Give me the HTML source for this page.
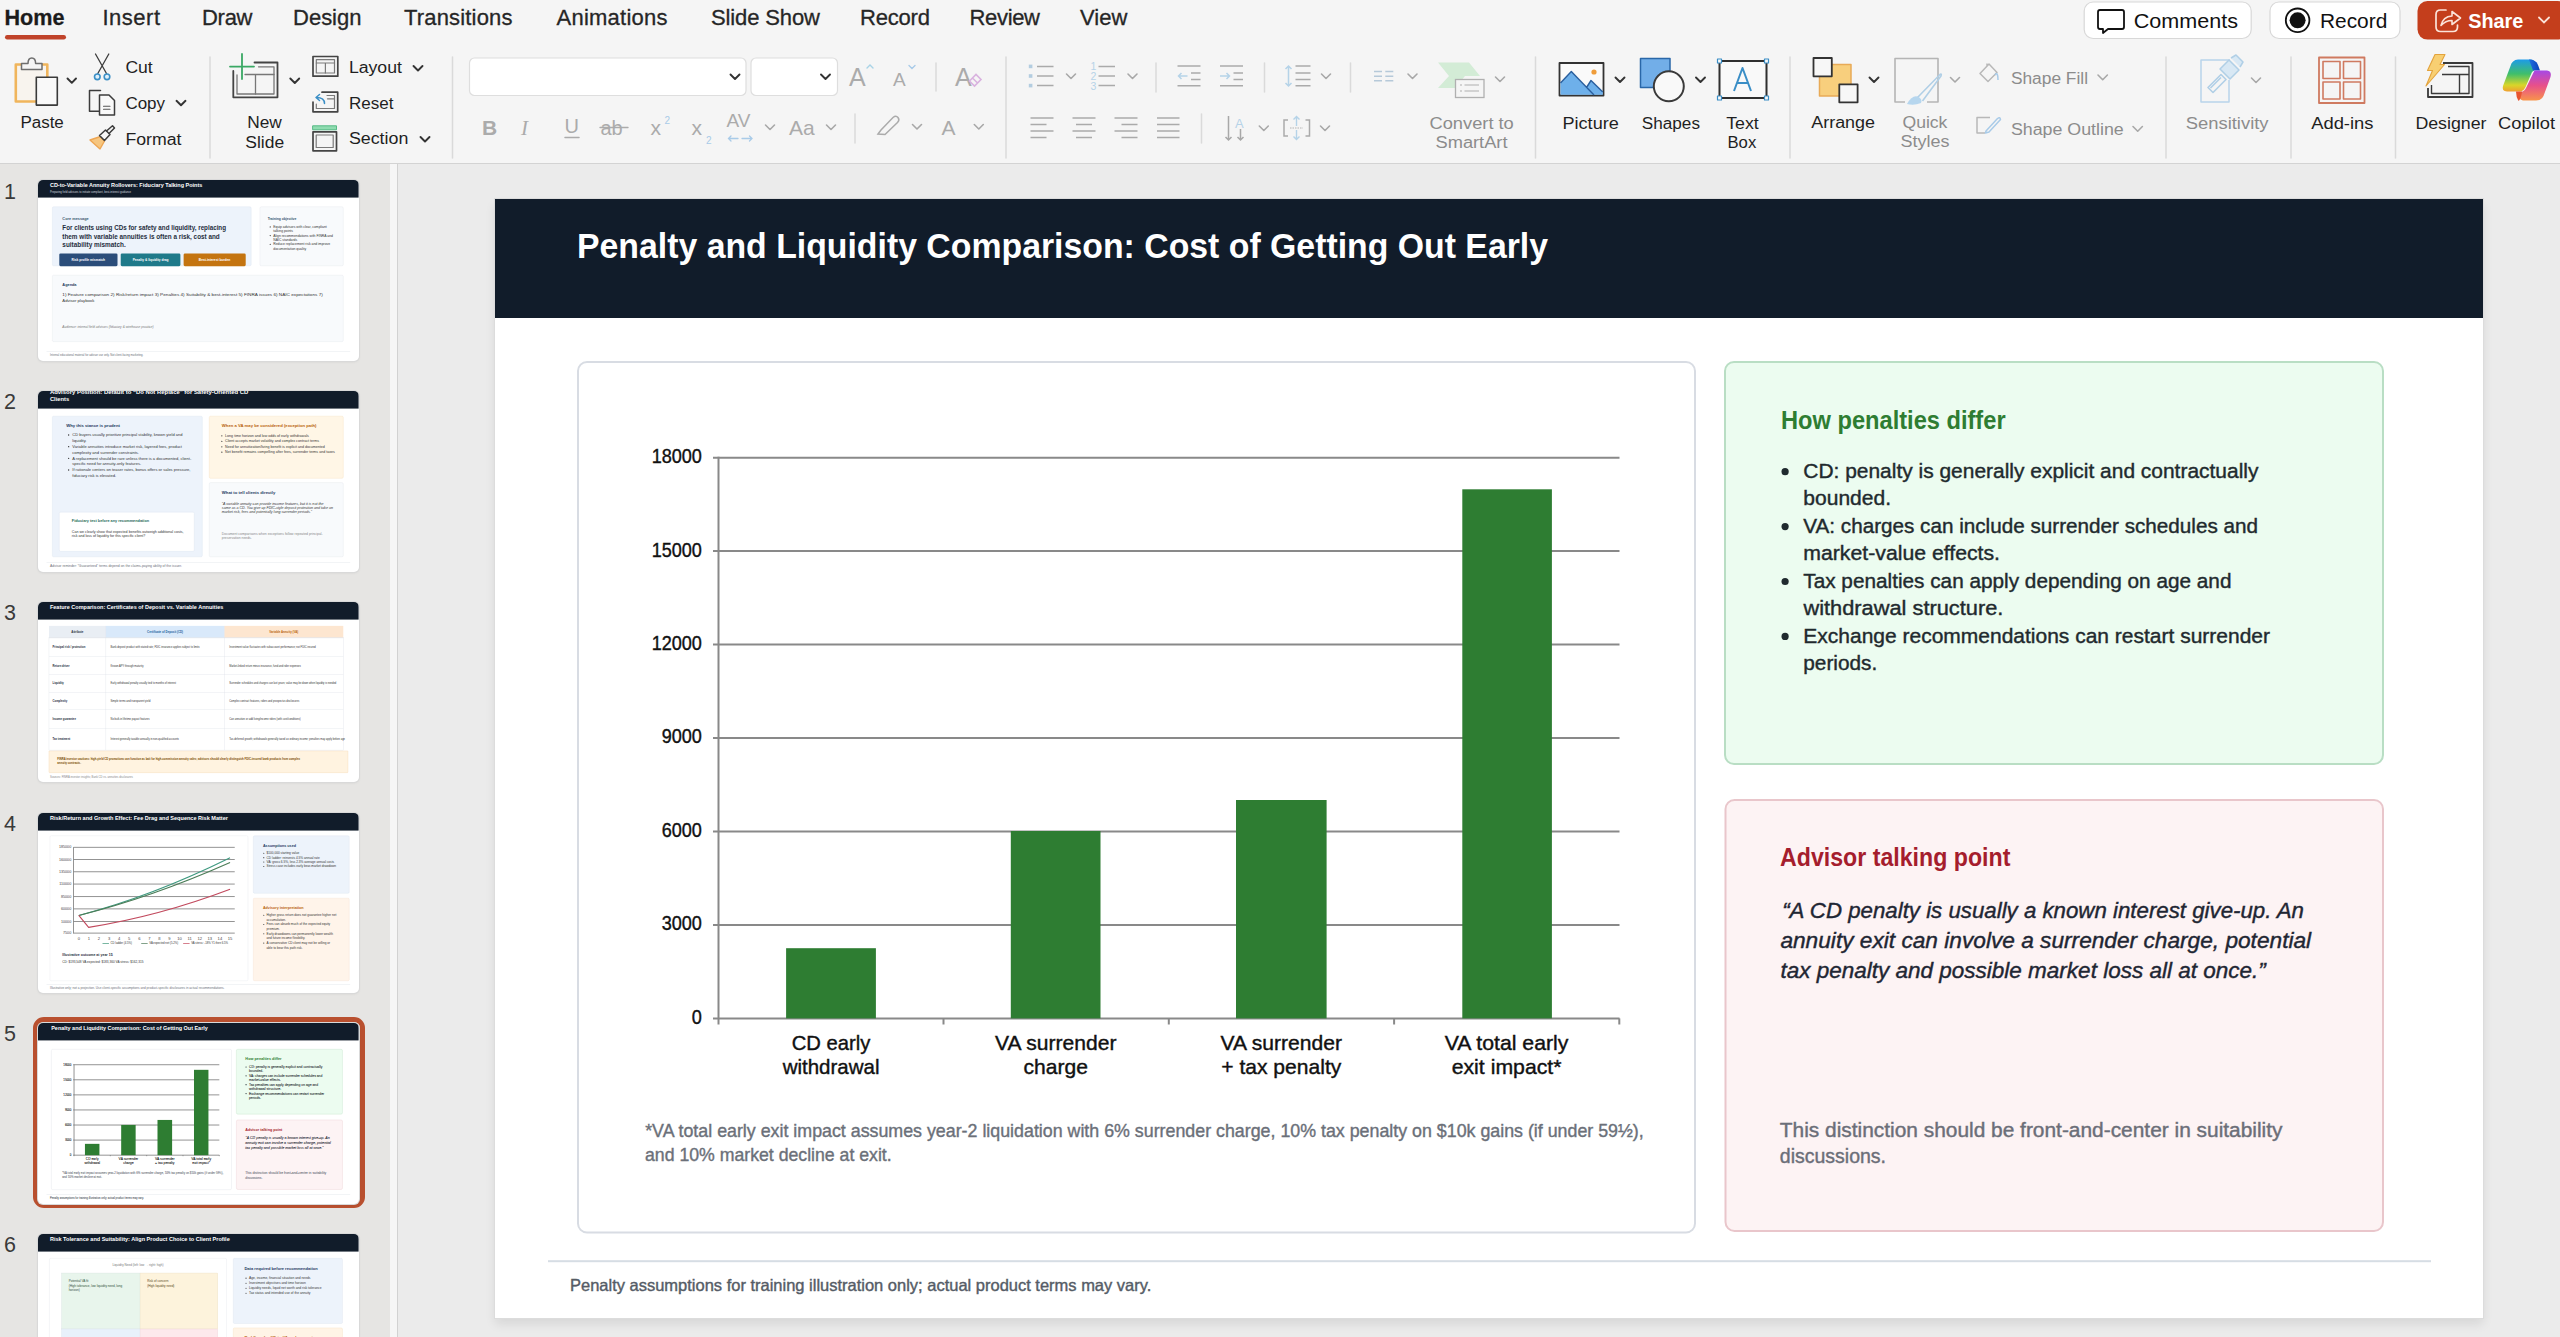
<!DOCTYPE html>
<html><head><meta charset="utf-8">
<style>
*{box-sizing:border-box}
html,body{margin:0;padding:0}
body{width:2560px;height:1337px;overflow:hidden;position:relative;background:#ebebeb;font-family:"Liberation Sans",sans-serif;color:#1a1a1a}
#top{position:absolute;left:0;top:0;width:2560px;height:164px;background:#f5f5f5;border-bottom:1px solid #d3d3d3}
#panel{position:absolute;left:0;top:164px;width:390px;height:1173px;background:#e6e5e3;overflow:hidden}
#pstrip{position:absolute;left:390px;top:164px;width:8px;height:1173px;background:#f6f6f6;border-right:1px solid #d2d2d2}
</style></head>
<body>
<div id="top">
<svg width="2560" height="45" viewBox="0 0 2560 45" style="position:absolute;left:0;top:0" font-family="Liberation Sans, sans-serif">
<g font-size="22" fill="#262626" stroke="#262626" stroke-width="0.3">
<text x="4.5" y="25" font-weight="bold" fill="#1b1b1b" textLength="60" lengthAdjust="spacingAndGlyphs">Home</text>
<text x="102.5" y="25" textLength="57.5" lengthAdjust="spacing">Insert</text>
<text x="202" y="25" textLength="50.5" lengthAdjust="spacing">Draw</text>
<text x="293" y="25" textLength="68.5" lengthAdjust="spacing">Design</text>
<text x="404" y="25" textLength="108.5" lengthAdjust="spacing">Transitions</text>
<text x="556.5" y="25" textLength="111" lengthAdjust="spacing">Animations</text>
<text x="711" y="25" textLength="109" lengthAdjust="spacing">Slide Show</text>
<text x="860" y="25" textLength="70" lengthAdjust="spacing">Record</text>
<text x="969.5" y="25" textLength="70.5" lengthAdjust="spacing">Review</text>
<text x="1080" y="25" textLength="47.5" lengthAdjust="spacing">View</text>
</g>
<rect x="5" y="35" width="61" height="4.5" rx="2.2" fill="#c0432a"/>
</svg>

<svg id="rib" width="2560" height="163" viewBox="0 0 2560 163" style="position:absolute;left:0;top:0" font-family="Liberation Sans, sans-serif">
<g fill="none" stroke-linecap="round" stroke-linejoin="round">
<!-- separators -->
<g stroke="#dadada" stroke-width="1.5">
<line x1="210" y1="57" x2="210" y2="158"/><line x1="452.5" y1="57" x2="452.5" y2="158"/>
<line x1="1006" y1="57" x2="1006" y2="158"/><line x1="1535.5" y1="57" x2="1535.5" y2="158"/>
<line x1="1790" y1="57" x2="1790" y2="158"/><line x1="2166" y1="57" x2="2166" y2="158"/>
<line x1="2291" y1="57" x2="2291" y2="158"/><line x1="2395.5" y1="57" x2="2395.5" y2="158"/>
<line x1="936" y1="63" x2="936" y2="91"/><line x1="855" y1="114" x2="855" y2="143"/>
<line x1="1156" y1="63" x2="1156" y2="92"/><line x1="1264.5" y1="63" x2="1264.5" y2="92"/>
<line x1="1350.5" y1="63" x2="1350.5" y2="92"/><line x1="1201.5" y1="114" x2="1201.5" y2="143"/>
</g>
<!-- Paste -->
<rect x="15.8" y="64.5" width="31.5" height="37" fill="#f8f4ee" stroke="#f0b55c" stroke-width="2.6"/>
<path d="M21.5 69.5 V63.5 H28 Q28 58 31.8 58 Q35.6 58 35.6 63.5 H42 V69.5 Z" fill="#f5f5f5" stroke="#6e6e6e" stroke-width="1.5"/>
<rect x="36.3" y="77.3" width="21" height="27.8" fill="#f9f9f9" stroke="#3a3a3a" stroke-width="1.6"/>
<!-- Cut -->
<path d="M95.5 54 L106.5 73.5 M108.8 54 L97.8 73.5" stroke="#3c3c3c" stroke-width="1.3"/>
<circle cx="97.3" cy="76.8" r="2.8" stroke="#3b8fc6" stroke-width="1.6" fill="#dff0fb"/>
<circle cx="107" cy="76.8" r="2.8" stroke="#3b8fc6" stroke-width="1.6" fill="#dff0fb"/>
<!-- Copy -->
<path d="M100.5 90.5 H89.5 V111.3 H98.8" stroke="#3c3c3c" stroke-width="1.5"/>
<path d="M99.5 95 H109 L114.5 100.5 V115 H99.5 Z" fill="#f9f9f9" stroke="#3c3c3c" stroke-width="1.5"/>
<path d="M103.5 106.2 H110 M103.5 109.3 H110" stroke="#555" stroke-width="1.1"/>
<!-- Format painter -->
<path d="M90 140 L100.5 136.5 L104.5 141 L100 149 Z" fill="#f6c680" stroke="#eea653" stroke-width="1.4"/>
<path d="M99.5 135.5 L105.5 130 L110 134.5 L104.5 140.5 Z" fill="#f7f7f7" stroke="#3c3c3c" stroke-width="1.5"/>
<path d="M106.5 131 L112.5 125.8 L114.5 128 L109 133.5" stroke="#3c3c3c" stroke-width="1.5"/>
<!-- New slide -->
<path d="M254.5 62.5 H277.5 V97.3 H233.3 V71" stroke="#444" stroke-width="1.8"/>
<path d="M258.5 66.8 H274 V94 H237 V75" stroke="#777" stroke-width="1.3"/>
<path d="M245 74.5 H274 M255.5 74.5 V94" stroke="#777" stroke-width="1.3"/>
<path d="M230 66.6 H254 M242 54 V79" stroke="#3aa864" stroke-width="1.8"/>
<!-- Layout -->
<rect x="313" y="56.5" width="24.8" height="19.7" stroke="#444" stroke-width="1.7"/>
<rect x="316.3" y="59.7" width="18.2" height="13.3" stroke="#7a7a7a" stroke-width="1.2"/>
<path d="M316.3 63 H334.5 M325.4 63 V73" stroke="#7a7a7a" stroke-width="1.2"/>
<!-- Reset -->
<path d="M322 92.2 H337.7 V111.8 H313 V102" stroke="#444" stroke-width="1.7"/>
<path d="M327 95.5 H334.5 V108.5 H316.3 V104" stroke="#7a7a7a" stroke-width="1.2"/>
<path d="M327.5 98.8 H334.5" stroke="#7a7a7a" stroke-width="1.2"/>
<path d="M324.5 103.5 Q324.5 97.5 316.5 97.5 M319.5 94.5 L316 97.5 L319.5 100.5" stroke="#3b8fc6" stroke-width="1.5"/>
<!-- Section -->
<rect x="313" y="125.8" width="23.5" height="4" fill="#8fdcb0" stroke="#55b985" stroke-width="1"/>
<rect x="313" y="131.8" width="23.5" height="19" stroke="#444" stroke-width="1.7"/>
<rect x="316.2" y="135" width="17" height="12.5" stroke="#7a7a7a" stroke-width="1.2"/>
<!-- chevrons dark -->
<g stroke="#333" stroke-width="1.9">
<path d="M67.5 78.5 L71.8 82.8 L76 78.5"/><path d="M176.5 100.8 L181 105.2 L185.5 100.8"/>
<path d="M290.3 78.5 L294.8 83 L299.2 78.5"/><path d="M413.5 66 L418 70.5 L422.5 66"/>
<path d="M420.5 137 L425 141.5 L429.5 137"/><path d="M730.5 74.5 L735 79 L739.5 74.5"/>
<path d="M821 74.5 L825.5 79 L830 74.5"/>
<path d="M1615.5 77.5 L1620 82 L1624.5 77.5"/><path d="M1696 77.5 L1700.5 82 L1705 77.5"/>
<path d="M1869.5 77.5 L1874 82 L1878.5 77.5"/>
</g>
<!-- chevrons gray -->
<g stroke="#a8a8a8" stroke-width="1.6">
<path d="M765.5 125 L770 129.5 L774.5 125"/><path d="M826.5 125 L831 129.5 L835.5 125"/>
<path d="M912.5 124.5 L917 129 L921.5 124.5"/><path d="M974.3 124.5 L978.8 129 L983.3 124.5"/>
<path d="M1066.5 74 L1071 78.5 L1075.5 74"/><path d="M1128 74 L1132.5 78.5 L1137 74"/>
<path d="M1321.5 74 L1326 78.5 L1330.5 74"/><path d="M1408 74 L1412.5 78.5 L1417 74"/>
<path d="M1495.5 77 L1500 81.5 L1504.5 77"/>
<path d="M1259.3 126 L1263.8 130.5 L1268.3 126"/><path d="M1320.5 126 L1325 130.5 L1329.5 126"/>
<path d="M1950.5 77.5 L1955 82 L1959.5 77.5"/><path d="M2098 75 L2102.7 79.7 L2107.4 75"/>
<path d="M2133 126.5 L2137.7 131.2 L2142.4 126.5"/><path d="M2251.5 78 L2256 82.5 L2260.5 78"/>
</g>
<!-- font boxes -->
<rect x="469.5" y="58" width="276.5" height="37.5" rx="5" fill="#fff" stroke="#dedede" stroke-width="1.2"/>
<rect x="751" y="58" width="86.5" height="37.5" rx="5" fill="#fff" stroke="#dedede" stroke-width="1.2"/>
<g stroke="#333" stroke-width="1.9"><path d="M730.5 74.5 L735 79 L739.5 74.5"/><path d="M821 74.5 L825.5 79 L830 74.5"/></g>
</g>
<!-- font group glyphs -->
<g fill="#ababab">
<text x="849" y="86" font-size="25" style="font-weight:300">A</text>
<text x="893" y="86" font-size="19">A</text>
<text x="955" y="86" font-size="25">A</text>
<text x="482" y="135" font-size="21" font-weight="bold">B</text>
<text x="521" y="135" font-size="21" font-style="italic" font-family="Liberation Serif">I</text>
<text x="564.5" y="133" font-size="20">U</text>
<text x="600.5" y="135" font-size="20">ab</text>
<text x="650.5" y="135" font-size="21">x</text>
<text x="691.5" y="135" font-size="21">x</text>
<text x="726.5" y="127" font-size="19">AV</text>
<text x="789" y="135" font-size="21">Aa</text>
<text x="941.5" y="135" font-size="21">A</text>
</g>
<g fill="none" stroke-linecap="round">
<path d="M565 137.5 H579" stroke="#ababab" stroke-width="1.5"/>
<path d="M600 127.5 H628" stroke="#ababab" stroke-width="1.4"/>
<path d="M867 68 L870 65 L873 68" stroke="#a9d3e6" stroke-width="1.4"/>
<path d="M909 65.5 L912 68.5 L915 65.5" stroke="#a9cbe8" stroke-width="1.4"/>
<path d="M969.5 81 L976 74.5 L981 79.5 L974.5 86 Z M972.5 78 L977.5 83" stroke="#d9b2df" stroke-width="1.6"/>
<path d="M728.5 138.5 H738 M731 136 L728.5 138.5 L731 141 M742 138.5 H752 M749.5 136 L752 138.5 L749.5 141" stroke="#a9cbe8" stroke-width="1.3"/>
<path d="M878 134 L881 130 L893 117.5 Q896 115 898 117.5 Q900 120 897.5 122.5 L885 134.5 Z" stroke="#ababab" stroke-width="1.5"/>
</g>
<g fill="#a9cbe8"><text x="664.5" y="124" font-size="10">2</text><text x="706" y="144" font-size="10">2</text></g>
<!-- paragraph group -->
<g fill="none" stroke-width="1.5" stroke-linecap="butt">
<g fill="#b3cde0"><rect x="1028.8" y="64.6" width="3.6" height="3.6"/><rect x="1028.8" y="74.2" width="3.6" height="3.6"/><rect x="1028.8" y="83.8" width="3.6" height="3.6"/></g>
<path d="M1037 66.4 H1053.5 M1037 76 H1053.5 M1037 85.6 H1053.5" stroke="#aaaaaa"/>
<path d="M1098.5 66.4 H1115 M1098.5 76 H1115 M1098.5 85.6 H1115" stroke="#aaaaaa"/>
<path d="M1177.5 66.1 H1200.5 M1191 72.9 H1200.5 M1191 79.4 H1200.5 M1177.5 85.8 H1200.5" stroke="#aaaaaa"/>
<path d="M1187.5 76 H1178.5 M1181.5 73 L1178.5 76 L1181.5 79" stroke="#b5d3e8"/>
<path d="M1220 66.1 H1243 M1233.5 72.9 H1243 M1233.5 79.4 H1243 M1220 85.8 H1243" stroke="#aaaaaa"/>
<path d="M1220 76 H1229.5 M1226.5 73 L1229.5 76 L1226.5 79" stroke="#b5d3e8"/>
<path d="M1288.5 66 V86 M1285.5 69 L1288.5 66 L1291.5 69 M1285.5 83 L1288.5 86 L1291.5 83" stroke="#b5d3e8"/>
<path d="M1295.5 66.1 H1310.5 M1295.5 72.9 H1310.5 M1295.5 79.4 H1310.5 M1295.5 85.8 H1310.5" stroke="#aaaaaa"/>
<path d="M1374 71.4 H1382 M1374 76.2 H1382 M1374 80.8 H1382 M1385.3 71.4 H1393.3 M1385.3 76.2 H1393.3 M1385.3 80.8 H1393.3" stroke="#b6c9d9"/>
<path d="M1030.5 117.9 H1053.5 M1030.5 124.5 H1046.5 M1030.5 130.9 H1053.5 M1030.5 137.4 H1046.5" stroke="#aaaaaa"/>
<path d="M1072.5 117.9 H1095.5 M1076 124.5 H1092 M1072.5 130.9 H1095.5 M1076 137.4 H1092" stroke="#aaaaaa"/>
<path d="M1114.5 117.9 H1137.5 M1121.5 124.5 H1137.5 M1114.5 130.9 H1137.5 M1121.5 137.4 H1137.5" stroke="#aaaaaa"/>
<path d="M1157 117.9 H1179.5 M1157 124.5 H1179.5 M1157 130.9 H1179.5 M1157 137.4 H1179.5" stroke="#aaaaaa"/>
<path d="M1228.5 116 V140 M1225.5 137 L1228.5 140 L1231.5 137 M1240.5 129 V140 M1237.5 137 L1240.5 140 L1243.5 137" stroke="#a8a8a8" stroke-width="1.5"/>
<path d="M1288 120 H1284 V136 H1288 M1305.5 120 H1309.5 V136 H1305.5" stroke="#aaaaaa" stroke-width="1.5"/>
<path d="M1296.5 116.5 V126 M1293.5 119.5 L1296.5 116.5 L1299.5 119.5 M1296.5 130 V139.5 M1293.5 136.5 L1296.5 139.5 L1299.5 136.5" stroke="#b5d3e8" stroke-width="1.4"/>
<path d="M1290 128 H1303" stroke="#b5b5b5" stroke-width="1.2" stroke-dasharray="1.5 1"/>
<!-- smartart -->
<path d="M1438 62.5 H1469 L1480 76 H1465 L1455 88 H1438 L1449 76 Z" fill="#d3ecd6" stroke="none"/>
<rect x="1455.5" y="79.5" width="28.5" height="18" fill="#f5f5f5" stroke="#b0b0b0" stroke-width="1.3"/>
<path d="M1460 85 H1462 M1464.5 85 H1479 M1460 91 H1462 M1464.5 91 H1479" stroke="#b0b0b0" stroke-width="1.2"/>
</g>
<g fill="#b5d3e8" font-size="10.5"><text x="1090.5" y="70">1</text><text x="1090.5" y="80">2</text><text x="1090.5" y="90">3</text></g>
<text x="1235" y="127.5" font-size="13" fill="#b5d3e8">A</text>
<!-- Picture -->
<g stroke-linejoin="round">
<rect x="1559.5" y="63" width="44" height="32.5" fill="#fafafa" stroke="#333" stroke-width="1.8"/>
<path d="M1560.5 94.8 V83 L1571.3 71.6 L1586.5 87.5 L1591 80.5 L1602.8 92 V94.8 Z" fill="#6eb0ea"/><path d="M1560.5 83 L1571.3 71.6 L1594 95 M1586.5 87.5 L1591 80.5 L1602.8 92" fill="none" stroke="#2a5f9e" stroke-width="1.4"/>
<circle cx="1594" cy="72" r="2.6" fill="#ef9d3a"/>
<!-- Shapes -->
<rect x="1640.5" y="58.5" width="29.5" height="29" fill="#72aee8" stroke="#2a67a8" stroke-width="1.5"/>
<circle cx="1668.8" cy="86.3" r="15" fill="#f9f9f9" stroke="#3a3a3a" stroke-width="2"/>
<!-- Text box -->
<rect x="1719.5" y="61" width="47" height="37" fill="#f9f9f9" stroke="#2f2f2f" stroke-width="2"/>
<g fill="#f9f9f9" stroke="#3a8ec6" stroke-width="1.2"><rect x="1717.5" y="59" width="4" height="4"/><rect x="1764.5" y="59" width="4" height="4"/><rect x="1717.5" y="96" width="4" height="4"/><rect x="1764.5" y="96" width="4" height="4"/></g>
<path d="M1734 91 L1742.5 68 L1751 91 M1737 83 H1748" fill="none" stroke="#3a8ec6" stroke-width="2"/>
<!-- Arrange -->
<rect x="1819.5" y="64.5" width="31.5" height="31.5" fill="#f8cf7d" stroke="#e8aa57" stroke-width="1.5"/>
<rect x="1813.5" y="58" width="18.3" height="18.3" fill="#f7f7f7" stroke="#333" stroke-width="1.8"/>
<rect x="1839.3" y="84.3" width="18.3" height="18" fill="#f7f7f7" stroke="#333" stroke-width="1.8"/>
<!-- Quick styles -->
<path d="M1905 102 H1895 V58.5 H1938 V102 H1927" fill="none" stroke="#b5b5b5" stroke-width="1.6"/>
<path d="M1917 98 L1940 74.5 Q1942 73 1941 76 L1922.5 101" fill="none" stroke="#b0cfe6" stroke-width="1.6"/>
<path d="M1907 104 Q1912 95 1917.5 96.5 Q1923 99 1921 103 Q1914 106 1907 104 Z" fill="#b6d6ee" stroke="none"/>
<!-- Shape fill / outline -->
<path d="M1980 73.5 L1989 64 L1997 72.5 L1988 81.5 Z M1987 66 V63.5" fill="none" stroke="#b8b8b8" stroke-width="1.5"/>
<path d="M1995 75 Q1998 71 1998 80" fill="none" stroke="#a9cbe8" stroke-width="1.5"/>
<path d="M1990 117.5 H1977 V133 H1985" fill="none" stroke="#b8b8b8" stroke-width="1.5"/>
<path d="M1986 131 L1997.5 118.5 Q2000 116.5 2000.5 119.5 L1989 132 L1985.5 133 Z" fill="none" stroke="#a9cbe8" stroke-width="1.5"/>
<!-- Sensitivity -->
<path d="M2230 60 H2201 V102 H2229 V80" fill="none" stroke="#b8d4ea" stroke-width="1.5"/>
<path d="M2208 87.5 L2221 74.5 L2226 79.5 L2213 92.5 Z M2210.5 88 L2221 77.5" fill="none" stroke="#b0cfe6" stroke-width="1.6"/>
<path d="M2220 69 L2229 60 L2239 70 L2230 79 Z M2231 58 L2236 55 L2243 62 L2240 67" fill="#d8e8f4" stroke="#b0cfe6" stroke-width="1.5"/>
<!-- Add-ins -->
<rect x="2319" y="57.5" width="45.5" height="45.5" fill="none" stroke="#cf7a60" stroke-width="1.8"/>
<g fill="none" stroke="#cf7a60" stroke-width="1.6"><rect x="2323" y="61.5" width="17" height="17"/><rect x="2343.5" y="61.5" width="17" height="17"/><rect x="2323" y="82" width="17" height="17"/><rect x="2343.5" y="82" width="17" height="17"/></g>
<!-- Designer -->
<path d="M2443 63 H2472.5 V97 H2428 V88" fill="none" stroke="#3a3a3a" stroke-width="1.8"/>
<path d="M2448 66.5 H2469 V93.5 H2431.5 V85 M2442 74.5 H2469 M2459.5 74.5 V93.5" fill="none" stroke="#3a3a3a" stroke-width="1.4"/>
<path d="M2435 54.5 L2445 54.5 L2440 64.5 L2444.5 64.5 L2426 86 L2432.5 70.5 L2427.5 70.5 Z" fill="#f8cf72" stroke="#e3a33c" stroke-width="1.1" stroke-linejoin="round"/>
</g>
<!-- Copilot -->
<defs>
<linearGradient id="cpl" x1="0" y1="0" x2="0" y2="1"><stop offset="0" stop-color="#1c9be8"/><stop offset="0.45" stop-color="#3fbf6a"/><stop offset="0.8" stop-color="#d8d62a"/><stop offset="1" stop-color="#f0a030"/></linearGradient>
<linearGradient id="cpr" x1="0" y1="0" x2="0" y2="1"><stop offset="0" stop-color="#a648e6"/><stop offset="0.5" stop-color="#e8508a"/><stop offset="1" stop-color="#f8944a"/></linearGradient>
<linearGradient id="cpt" x1="0" y1="0" x2="1" y2="0"><stop offset="0" stop-color="#1f6fe0"/><stop offset="1" stop-color="#0b3fb8"/></linearGradient>
</defs>
<path d="M2536 69 Q2537 60 2531 59.5 L2518 59.5 Q2512 60 2510.5 66 L2503 86 Q2501.5 91 2507 91.5 L2520 91.5 Q2524 91 2526 86 L2532 72 Z" fill="url(#cpl)"/>
<path d="M2529 59.5 Q2536 59.5 2538 65 L2540 70.5 L2533 70.5 Z" fill="url(#cpt)"/>
<path d="M2535 70.5 L2547 70.5 Q2552 71 2550.5 77 L2543.5 96 Q2541.5 100.5 2536 100.5 L2523 100.5 Q2519 100 2516.5 92 L2521 92 Q2524.5 91.5 2526.5 87 L2533.5 72.5 Q2534 70.8 2535 70.5 Z" fill="url(#cpr)"/>
<path d="M2516 91.5 L2522 91.5 Q2521 99 2518.5 101 Q2516 97 2516 91.5 Z" fill="#e85530"/>
<!-- top buttons -->
<rect x="2084.2" y="2" width="167" height="36.5" rx="9" fill="#fff" stroke="#d8d8d8" stroke-width="1.2"/>
<path d="M2100 10 H2122 Q2124 10 2124 12 V27 Q2124 29 2122 29 H2108 L2103 33 V29 H2100 Q2098 29 2098 27 V12 Q2098 10 2100 10 Z" fill="none" stroke="#111" stroke-width="1.8" stroke-linejoin="round"/>
<rect x="2270" y="2" width="130" height="36.5" rx="9" fill="#fff" stroke="#d8d8d8" stroke-width="1.2"/>
<circle cx="2297.6" cy="20.3" r="11.8" fill="none" stroke="#111" stroke-width="1.8"/>
<circle cx="2297.6" cy="20.3" r="8" fill="#111"/>
<rect x="2417.5" y="1" width="150" height="38.6" rx="10" fill="#c43e1c"/>
<path d="M2446 10 H2440.5 Q2436 10 2436 14.5 V27 Q2436 31.5 2440.5 31.5 H2453 Q2457.5 31.5 2457.5 27 V25" fill="none" stroke="#fbe3d9" stroke-width="1.7" stroke-linecap="round"/>
<path d="M2441 25.5 Q2443 16.5 2452 16 V11.5 L2460.5 18 L2452 24.5 V20.5 Q2445.5 20.5 2441 25.5 Z" fill="none" stroke="#fbe3d9" stroke-width="1.6" stroke-linejoin="round"/>
<path d="M2539 17.5 L2544 22.5 L2549 17.5" fill="none" stroke="#fbe3d9" stroke-width="1.8" stroke-linecap="round"/>
<!-- labels -->
<text x="20.40" y="128.4" font-size="16" font-weight="normal" fill="#1f1f1f" textLength="43.41" lengthAdjust="spacingAndGlyphs">Paste</text>
<text x="125.40" y="73.4" font-size="16" font-weight="normal" fill="#1f1f1f" textLength="27.30" lengthAdjust="spacingAndGlyphs">Cut</text>
<text x="125.40" y="108.5" font-size="16" font-weight="normal" fill="#1f1f1f" textLength="39.65" lengthAdjust="spacingAndGlyphs">Copy</text>
<text x="125.40" y="144.8" font-size="16" font-weight="normal" fill="#1f1f1f" textLength="56.07" lengthAdjust="spacingAndGlyphs">Format</text>
<text x="247.20" y="128.4" font-size="16" font-weight="normal" fill="#1f1f1f" textLength="34.60" lengthAdjust="spacingAndGlyphs">New</text>
<text x="245.30" y="147.7" font-size="16" font-weight="normal" fill="#1f1f1f" textLength="38.88" lengthAdjust="spacingAndGlyphs">Slide</text>
<text x="348.90" y="73.1" font-size="16" font-weight="normal" fill="#1f1f1f" textLength="53.04" lengthAdjust="spacingAndGlyphs">Layout</text>
<text x="348.90" y="109.2" font-size="16" font-weight="normal" fill="#1f1f1f" textLength="44.50" lengthAdjust="spacingAndGlyphs">Reset</text>
<text x="348.90" y="144.4" font-size="16" font-weight="normal" fill="#1f1f1f" textLength="59.46" lengthAdjust="spacingAndGlyphs">Section</text>
<text x="1429.50" y="128.75" font-size="16" font-weight="normal" fill="#8c8c8c" textLength="84.26" lengthAdjust="spacingAndGlyphs">Convert to</text>
<text x="1435.50" y="147.5" font-size="16" font-weight="normal" fill="#8c8c8c" textLength="72.02" lengthAdjust="spacingAndGlyphs">SmartArt</text>
<text x="1562.50" y="128.75" font-size="16" font-weight="normal" fill="#1f1f1f" textLength="56.25" lengthAdjust="spacingAndGlyphs">Picture</text>
<text x="1641.75" y="128.75" font-size="16" font-weight="normal" fill="#1f1f1f" textLength="58.21" lengthAdjust="spacingAndGlyphs">Shapes</text>
<text x="1726.25" y="128.75" font-size="16" font-weight="normal" fill="#1f1f1f" textLength="32.55" lengthAdjust="spacingAndGlyphs">Text</text>
<text x="1727.50" y="147.5" font-size="16" font-weight="normal" fill="#1f1f1f" textLength="28.72" lengthAdjust="spacingAndGlyphs">Box</text>
<text x="1811.25" y="128.1" font-size="16" font-weight="normal" fill="#1f1f1f" textLength="63.77" lengthAdjust="spacingAndGlyphs">Arrange</text>
<text x="1902.50" y="128" font-size="16" font-weight="normal" fill="#8c8c8c" textLength="44.89" lengthAdjust="spacingAndGlyphs">Quick</text>
<text x="1900.50" y="147.1" font-size="16" font-weight="normal" fill="#8c8c8c" textLength="48.97" lengthAdjust="spacingAndGlyphs">Styles</text>
<text x="2010.90" y="83.6" font-size="16" font-weight="normal" fill="#8c8c8c" textLength="77.15" lengthAdjust="spacingAndGlyphs">Shape Fill</text>
<text x="2010.90" y="134.8" font-size="16" font-weight="normal" fill="#8c8c8c" textLength="112.86" lengthAdjust="spacingAndGlyphs">Shape Outline</text>
<text x="2185.80" y="129" font-size="16" font-weight="normal" fill="#8c8c8c" textLength="82.73" lengthAdjust="spacingAndGlyphs">Sensitivity</text>
<text x="2311.20" y="129" font-size="16" font-weight="normal" fill="#1f1f1f" textLength="62.24" lengthAdjust="spacingAndGlyphs">Add-ins</text>
<text x="2415.40" y="129" font-size="16" font-weight="normal" fill="#1f1f1f" textLength="71.13" lengthAdjust="spacingAndGlyphs">Designer</text>
<text x="2498.00" y="129" font-size="16" font-weight="normal" fill="#1f1f1f" textLength="57.01" lengthAdjust="spacingAndGlyphs">Copilot</text>
<text x="2133.80" y="28.4" font-size="20.5" font-weight="normal" fill="#111" textLength="104.21" lengthAdjust="spacingAndGlyphs">Comments</text>
<text x="2320.00" y="28.4" font-size="20.5" font-weight="normal" fill="#111" textLength="67.29" lengthAdjust="spacingAndGlyphs">Record</text>
<text x="2468.20" y="28.4" font-size="20.5" font-weight="bold" fill="#fff" textLength="55.18" lengthAdjust="spacingAndGlyphs">Share</text>
</svg>

</div>
<div id="panel">
<div style="position:absolute;left:4px;top:17.6px;font-size:21.5px;line-height:1;color:#3a3a3a;font-family:'Liberation Sans',sans-serif">1</div>
<div style="position:absolute;left:38.4px;top:16.4px;width:320.6px;height:180.5px;background:#fff;border-radius:5px;overflow:hidden;box-shadow:0 0 0 1px #d9d9d9, 0 1px 3px rgba(0,0,0,0.08)">
<svg width="320.6" height="180.5" viewBox="0 0 1988 1119" preserveAspectRatio="none" font-family="Liberation Sans, sans-serif" style="position:absolute;left:0;top:0"><rect x="0" y="0" width="1988" height="109" rx="0" fill="#111c2a" stroke="none" stroke-width="2"/><text x="74" y="45" font-size="38" fill="#fff" font-weight="bold" textLength="945" lengthAdjust="spacingAndGlyphs">CD-to-Variable Annuity Rollovers: Fiduciary Talking Points</text><text x="74" y="78" font-size="17.0" fill="#cfd6df" font-weight="normal" font-style="normal" text-anchor="start">Preparing field advisors to initiate compliant, best-interest guidance</text><rect x="89" y="166" width="1233" height="366" rx="8" fill="#edf3fb" stroke="#d5dfeb" stroke-width="2"/><text x="151" y="248" font-size="24.0" fill="#3b5670" font-weight="bold" font-style="normal" text-anchor="start">Core message</text><text x="151" y="308" font-size="40" fill="#1f2d3d" font-weight="bold" textLength="1015" lengthAdjust="spacingAndGlyphs">For clients using CDs for safety and liquidity, replacing</text><text x="151" y="363" font-size="40" fill="#1f2d3d" font-weight="bold" textLength="976" lengthAdjust="spacingAndGlyphs">them with variable annuities is often a risk, cost and</text><text x="151" y="418" font-size="40" fill="#1f2d3d" font-weight="bold" textLength="393" lengthAdjust="spacingAndGlyphs">suitability mismatch.</text><rect x="132" y="456" width="361" height="78" rx="8" fill="#2b4d7a" stroke="none" stroke-width="2"/><rect x="513" y="456" width="370" height="78" rx="8" fill="#1f7a8a" stroke="none" stroke-width="2"/><rect x="903" y="456" width="385" height="78" rx="8" fill="#c47410" stroke="none" stroke-width="2"/><text x="312" y="503" font-size="20.0" fill="#fff" font-weight="bold" font-style="normal" text-anchor="middle">Risk profile mismatch</text><text x="698" y="503" font-size="20.0" fill="#fff" font-weight="bold" font-style="normal" text-anchor="middle">Penalty &amp; liquidity drag</text><text x="1095" y="503" font-size="20.0" fill="#fff" font-weight="bold" font-style="normal" text-anchor="middle">Best-interest burden</text><rect x="1376" y="166" width="517" height="366" rx="8" fill="#f8fafc" stroke="#dfe4ea" stroke-width="2"/><text x="1424" y="245" font-size="21.0" fill="#3b5670" font-weight="bold" font-style="normal" text-anchor="start">Training objective</text><circle cx="1440" cy="290.7" r="3.6" fill="#333"/><text x="1458.9" y="297.0" font-size="21.0" fill="#333" font-weight="normal" font-style="normal" text-anchor="start">Equip advisors with clear, compliant</text><text x="1458.9" y="324.0" font-size="21.0" fill="#333" font-weight="normal" font-style="normal" text-anchor="start">talking points</text><circle cx="1440" cy="344.7" r="3.6" fill="#333"/><text x="1458.9" y="351.0" font-size="21.0" fill="#333" font-weight="normal" font-style="normal" text-anchor="start">Align recommendations with FINRA and</text><text x="1458.9" y="378.0" font-size="21.0" fill="#333" font-weight="normal" font-style="normal" text-anchor="start">NAIC standards</text><circle cx="1440" cy="398.7" r="3.6" fill="#333"/><text x="1458.9" y="405.0" font-size="21.0" fill="#333" font-weight="normal" font-style="normal" text-anchor="start">Reduce replacement risk and improve</text><text x="1458.9" y="432.0" font-size="21.0" fill="#333" font-weight="normal" font-style="normal" text-anchor="start">documentation quality</text><rect x="89" y="590" width="1804" height="412" rx="8" fill="#f8fafc" stroke="#dfe4ea" stroke-width="2"/><text x="151" y="655" font-size="24.0" fill="#1f3a5f" font-weight="bold" font-style="normal" text-anchor="start">Agenda</text><text x="151" y="722" font-size="26" fill="#333" textLength="1615" lengthAdjust="spacingAndGlyphs">1) Feature comparison  2) Risk/return impact  3) Penalties  4) Suitability &amp; best-interest  5) FINRA issues  6) NAIC expectations  7)</text><text x="151" y="757" font-size="26.0" fill="#333" font-weight="normal" font-style="normal" text-anchor="start">Advisor playbook</text><text x="151" y="918" font-size="20.0" fill="#777" font-weight="normal" font-style="italic" text-anchor="start">Audience: internal field advisors (fiduciary &amp; wirehouse practice)</text><rect x="53" y="1061" width="1883" height="2" rx="0" fill="#d6dde4" stroke="none" stroke-width="2"/><text x="75" y="1092" font-size="17.0" fill="#6b7079" font-weight="normal" font-style="normal" text-anchor="start">Internal educational material for advisor use only. Not client-facing marketing.</text></svg>
</div>
<div style="position:absolute;left:4px;top:228.3px;font-size:21.5px;line-height:1;color:#3a3a3a;font-family:'Liberation Sans',sans-serif">2</div>
<div style="position:absolute;left:38.4px;top:227.1px;width:320.6px;height:180.5px;background:#fff;border-radius:5px;overflow:hidden;box-shadow:0 0 0 1px #d9d9d9, 0 1px 3px rgba(0,0,0,0.08)">
<svg width="320.6" height="180.5" viewBox="0 0 1988 1119" preserveAspectRatio="none" font-family="Liberation Sans, sans-serif" style="position:absolute;left:0;top:0"><rect x="0" y="0" width="1988" height="109" rx="0" fill="#111c2a" stroke="none" stroke-width="2"/><text x="74" y="16" font-size="38" fill="#fff" font-weight="bold" textLength="1230" lengthAdjust="spacingAndGlyphs">Advisory Position: Default to “Do Not Replace” for Safety-Oriented CD</text><text x="74" y="60" font-size="38" fill="#fff" font-weight="bold" textLength="120" lengthAdjust="spacingAndGlyphs">Clients</text><rect x="89" y="156" width="930" height="872" rx="8" fill="#edf3fb" stroke="#d5dfeb" stroke-width="2"/><text x="175" y="225" font-size="26.25" fill="#1f3a5f" font-weight="bold" font-style="normal" text-anchor="start">Why this stance is prudent</text><circle cx="190" cy="272.5" r="4.2" fill="#333"/><text x="212.5" y="280.0" font-size="25.0" fill="#333" font-weight="normal" font-style="normal" text-anchor="start">CD buyers usually prioritize principal stability, known yield and</text><text x="212.5" y="316.25" font-size="25.0" fill="#333" font-weight="normal" font-style="normal" text-anchor="start">liquidity.</text><circle cx="190" cy="345.0" r="4.2" fill="#333"/><text x="212.5" y="352.5" font-size="25.0" fill="#333" font-weight="normal" font-style="normal" text-anchor="start">Variable annuities introduce market risk, layered fees, product</text><text x="212.5" y="388.75" font-size="25.0" fill="#333" font-weight="normal" font-style="normal" text-anchor="start">complexity and surrender constraints.</text><circle cx="190" cy="417.5" r="4.2" fill="#333"/><text x="212.5" y="425.0" font-size="25.0" fill="#333" font-weight="normal" font-style="normal" text-anchor="start">A replacement should be rare unless there is a documented, client-</text><text x="212.5" y="461.25" font-size="25.0" fill="#333" font-weight="normal" font-style="normal" text-anchor="start">specific need for annuity-only features.</text><circle cx="190" cy="490.0" r="4.2" fill="#333"/><text x="212.5" y="497.5" font-size="25.0" fill="#333" font-weight="normal" font-style="normal" text-anchor="start">If rationale centers on teaser rates, bonus offers or sales pressure,</text><text x="212.5" y="533.75" font-size="25.0" fill="#333" font-weight="normal" font-style="normal" text-anchor="start">fiduciary risk is elevated.</text><rect x="132" y="751" width="837" height="243" rx="8" fill="#ffffff" stroke="#d5dfeb" stroke-width="2"/><text x="210" y="810" font-size="23.75" fill="#1f6b5a" font-weight="bold" font-style="normal" text-anchor="start">Fiduciary test before any recommendation</text><text x="210" y="880" font-size="22.5" fill="#333" font-weight="normal" font-style="normal" text-anchor="start">Can we clearly show that expected benefits outweigh additional costs,</text><text x="210" y="905" font-size="22.5" fill="#333" font-weight="normal" font-style="normal" text-anchor="start">risk and loss of liquidity for this specific client?</text><rect x="1062" y="156" width="831" height="385" rx="8" fill="#fff6e6" stroke="#f1dcb8" stroke-width="2"/><text x="1140" y="225" font-size="26.25" fill="#b8620a" font-weight="bold" font-style="normal" text-anchor="start">When a VA may be considered (exception path)</text><circle cx="1140" cy="278.2" r="3.8" fill="#333"/><text x="1160.25" y="285.0" font-size="22.5" fill="#333" font-weight="normal" font-style="normal" text-anchor="start">Long time horizon and low odds of early withdrawals</text><circle cx="1140" cy="312.0" r="3.8" fill="#333"/><text x="1160.25" y="318.75" font-size="22.5" fill="#333" font-weight="normal" font-style="normal" text-anchor="start">Client accepts market volatility and complex contract terms</text><circle cx="1140" cy="345.8" r="3.8" fill="#333"/><text x="1160.25" y="352.5" font-size="22.5" fill="#333" font-weight="normal" font-style="normal" text-anchor="start">Need for annuitization/living benefit is explicit and documented</text><circle cx="1140" cy="379.5" r="3.8" fill="#333"/><text x="1160.25" y="386.25" font-size="22.5" fill="#333" font-weight="normal" font-style="normal" text-anchor="start">Net benefit remains compelling after fees, surrender terms and taxes</text><rect x="1062" y="568" width="831" height="460" rx="8" fill="#f8fafc" stroke="#dfe4ea" stroke-width="2"/><text x="1140" y="640" font-size="26.25" fill="#1f3a5f" font-weight="bold" font-style="normal" text-anchor="start">What to tell clients directly</text><text x="1140" y="705" font-size="22.5" fill="#333" font-weight="normal" font-style="italic" text-anchor="start">“A variable annuity can provide income features, but it is not the</text><text x="1140" y="732" font-size="22.5" fill="#333" font-weight="normal" font-style="italic" text-anchor="start">same as a CD. You give up FDIC-style deposit protection and take on</text><text x="1140" y="759" font-size="22.5" fill="#333" font-weight="normal" font-style="italic" text-anchor="start">market risk, fees and potentially long surrender periods.”</text><text x="1140" y="895" font-size="21.25" fill="#888" font-weight="normal" font-style="normal" text-anchor="start">Document comparisons when exceptions follow repeated principal-</text><text x="1140" y="920" font-size="21.25" fill="#888" font-weight="normal" font-style="normal" text-anchor="start">preservation needs.</text><rect x="53" y="1061" width="1883" height="2" rx="0" fill="#d6dde4" stroke="none" stroke-width="2"/><text x="75" y="1092" font-size="21.25" fill="#6b7079" font-weight="normal" font-style="normal" text-anchor="start">Advisor reminder: “Guaranteed” terms depend on the claims-paying ability of the issuer.</text></svg>
</div>
<div style="position:absolute;left:4px;top:439.0px;font-size:21.5px;line-height:1;color:#3a3a3a;font-family:'Liberation Sans',sans-serif">3</div>
<div style="position:absolute;left:38.4px;top:437.8px;width:320.6px;height:180.5px;background:#fff;border-radius:5px;overflow:hidden;box-shadow:0 0 0 1px #d9d9d9, 0 1px 3px rgba(0,0,0,0.08)">
<svg width="320.6" height="180.5" viewBox="0 0 1988 1119" preserveAspectRatio="none" font-family="Liberation Sans, sans-serif" style="position:absolute;left:0;top:0"><rect x="0" y="0" width="1988" height="109" rx="0" fill="#111c2a" stroke="none" stroke-width="2"/><text x="74" y="45" font-size="38" fill="#fff" font-weight="bold" textLength="1075" lengthAdjust="spacingAndGlyphs">Feature Comparison: Certificates of Deposit vs. Variable Annuities</text><rect x="68" y="148" width="352" height="74" rx="0" fill="#e9eef4" stroke="none" stroke-width="2"/><rect x="420" y="148" width="736" height="74" rx="0" fill="#d9e9fa" stroke="none" stroke-width="2"/><rect x="1156" y="148" width="737" height="74" rx="0" fill="#fde6d0" stroke="none" stroke-width="2"/><rect x="68" y="222" width="1825" height="696" rx="0" fill="#ffffff" stroke="#d9dee5" stroke-width="2"/><rect x="68" y="222" width="1825" height="2" rx="0" fill="#d9dee5" stroke="none" stroke-width="2"/><rect x="68" y="339" width="1825" height="2" rx="0" fill="#d9dee5" stroke="none" stroke-width="2"/><rect x="68" y="450" width="1825" height="2" rx="0" fill="#d9dee5" stroke="none" stroke-width="2"/><rect x="68" y="559" width="1825" height="2" rx="0" fill="#d9dee5" stroke="none" stroke-width="2"/><rect x="68" y="666" width="1825" height="2" rx="0" fill="#d9dee5" stroke="none" stroke-width="2"/><rect x="68" y="785" width="1825" height="2" rx="0" fill="#d9dee5" stroke="none" stroke-width="2"/><rect x="420" y="148" width="2" height="770" rx="0" fill="#d9dee5" stroke="none" stroke-width="2"/><rect x="1156" y="148" width="2" height="770" rx="0" fill="#d9dee5" stroke="none" stroke-width="2"/><text x="244" y="195" font-size="18.0" fill="#1f2d3d" font-weight="bold" font-style="normal" text-anchor="middle">Attribute</text><text x="788" y="195" font-size="18.0" fill="#1f5f9a" font-weight="bold" font-style="normal" text-anchor="middle">Certificate of Deposit (CD)</text><text x="1524" y="195" font-size="18.0" fill="#b8620a" font-weight="bold" font-style="normal" text-anchor="middle">Variable Annuity (VA)</text><text x="90" y="286.5" font-size="17.0" fill="#1f2d3d" font-weight="bold" font-style="normal" text-anchor="start">Principal risk / protection</text><text x="450" y="286.5" font-size="16.0" fill="#333" font-weight="normal" font-style="normal" text-anchor="start">Bank deposit product with stated rate; FDIC insurance applies subject to limits</text><text x="1186" y="286.5" font-size="16.0" fill="#333" font-weight="normal" font-style="normal" text-anchor="start">Investment value fluctuates with subaccount performance; not FDIC insured</text><text x="90" y="400.5" font-size="17.0" fill="#1f2d3d" font-weight="bold" font-style="normal" text-anchor="start">Return driver</text><text x="450" y="400.5" font-size="16.0" fill="#333" font-weight="normal" font-style="normal" text-anchor="start">Known APY through maturity</text><text x="1186" y="400.5" font-size="16.0" fill="#333" font-weight="normal" font-style="normal" text-anchor="start">Market-linked return minus insurance, fund and rider expenses</text><text x="90" y="510.5" font-size="17.0" fill="#1f2d3d" font-weight="bold" font-style="normal" text-anchor="start">Liquidity</text><text x="450" y="510.5" font-size="16.0" fill="#333" font-weight="normal" font-style="normal" text-anchor="start">Early withdrawal penalty usually tied to months of interest</text><text x="1186" y="510.5" font-size="16.0" fill="#333" font-weight="normal" font-style="normal" text-anchor="start">Surrender schedules and charges can last years; value may be down when liquidity is needed</text><text x="90" y="618.5" font-size="17.0" fill="#1f2d3d" font-weight="bold" font-style="normal" text-anchor="start">Complexity</text><text x="450" y="618.5" font-size="16.0" fill="#333" font-weight="normal" font-style="normal" text-anchor="start">Simple terms and transparent yield</text><text x="1186" y="618.5" font-size="16.0" fill="#333" font-weight="normal" font-style="normal" text-anchor="start">Complex contract features, riders and prospectus disclosures</text><text x="90" y="731.5" font-size="17.0" fill="#1f2d3d" font-weight="bold" font-style="normal" text-anchor="start">Income guarantee</text><text x="450" y="731.5" font-size="16.0" fill="#333" font-weight="normal" font-style="normal" text-anchor="start">No built-in lifetime payout features</text><text x="1186" y="731.5" font-size="16.0" fill="#333" font-weight="normal" font-style="normal" text-anchor="start">Can annuitize or add living/income riders (with cost/conditions)</text><text x="90" y="857.5" font-size="17.0" fill="#1f2d3d" font-weight="bold" font-style="normal" text-anchor="start">Tax treatment</text><text x="450" y="857.5" font-size="16.0" fill="#333" font-weight="normal" font-style="normal" text-anchor="start">Interest generally taxable annually in non-qualified accounts</text><text x="1186" y="857.5" font-size="16.0" fill="#333" font-weight="normal" font-style="normal" text-anchor="start">Tax-deferred growth; withdrawals generally taxed as ordinary income; penalties may apply before age</text><rect x="68" y="923" width="1854" height="135" rx="4" fill="#fff3e0" stroke="#f1d3a6" stroke-width="2"/><text x="120" y="980" font-size="17.0" fill="#7a4a00" font-weight="bold" font-style="normal" text-anchor="start">FINRA investor cautions: high-yield CD promotions can function as bait for high-commission annuity sales; advisors should clearly distinguish FDIC-insured bank products from complex</text><text x="120" y="1005" font-size="17.0" fill="#7a4a00" font-weight="bold" font-style="normal" text-anchor="start">annuity contracts.</text><text x="75" y="1092" font-size="17.0" fill="#888" font-weight="normal" font-style="normal" text-anchor="start">Sources: FINRA investor insights; Bank CD vs. annuities disclosures</text></svg>
</div>
<div style="position:absolute;left:4px;top:649.7px;font-size:21.5px;line-height:1;color:#3a3a3a;font-family:'Liberation Sans',sans-serif">4</div>
<div style="position:absolute;left:38.4px;top:648.5px;width:320.6px;height:180.5px;background:#fff;border-radius:5px;overflow:hidden;box-shadow:0 0 0 1px #d9d9d9, 0 1px 3px rgba(0,0,0,0.08)">
<svg width="320.6" height="180.5" viewBox="0 0 1988 1119" preserveAspectRatio="none" font-family="Liberation Sans, sans-serif" style="position:absolute;left:0;top:0"><rect x="0" y="0" width="1988" height="109" rx="0" fill="#111c2a" stroke="none" stroke-width="2"/><text x="74" y="45" font-size="38" fill="#fff" font-weight="bold" textLength="1104" lengthAdjust="spacingAndGlyphs">Risk/Return and Growth Effect: Fee Drag and Sequence Risk Matter</text><rect x="74" y="141" width="1228" height="899" rx="8" fill="#ffffff" stroke="#dfe4ea" stroke-width="2"/><rect x="220" y="210" width="1000" height="5" rx="0" fill="#7a7a7a" stroke="none" stroke-width="2"/><text x="206" y="219" font-size="23.0" fill="#444" font-weight="normal" font-style="normal" text-anchor="end">185000</text><rect x="220" y="286" width="1000" height="5" rx="0" fill="#7a7a7a" stroke="none" stroke-width="2"/><text x="206" y="295" font-size="23.0" fill="#444" font-weight="normal" font-style="normal" text-anchor="end">160000</text><rect x="220" y="362" width="1000" height="5" rx="0" fill="#7a7a7a" stroke="none" stroke-width="2"/><text x="206" y="371" font-size="23.0" fill="#444" font-weight="normal" font-style="normal" text-anchor="end">135000</text><rect x="220" y="438" width="1000" height="5" rx="0" fill="#7a7a7a" stroke="none" stroke-width="2"/><text x="206" y="447" font-size="23.0" fill="#444" font-weight="normal" font-style="normal" text-anchor="end">110000</text><rect x="220" y="516" width="1000" height="5" rx="0" fill="#7a7a7a" stroke="none" stroke-width="2"/><text x="206" y="525" font-size="23.0" fill="#444" font-weight="normal" font-style="normal" text-anchor="end">85000</text><rect x="220" y="592" width="1000" height="5" rx="0" fill="#7a7a7a" stroke="none" stroke-width="2"/><text x="206" y="601" font-size="23.0" fill="#444" font-weight="normal" font-style="normal" text-anchor="end">60000</text><rect x="220" y="670" width="1000" height="5" rx="0" fill="#7a7a7a" stroke="none" stroke-width="2"/><text x="206" y="679" font-size="23.0" fill="#444" font-weight="normal" font-style="normal" text-anchor="end">10000</text><rect x="220" y="742" width="1000" height="5" rx="0" fill="#7a7a7a" stroke="none" stroke-width="2"/><text x="206" y="751" font-size="23.0" fill="#444" font-weight="normal" font-style="normal" text-anchor="end">7500</text><rect x="218" y="212" width="5" height="535" rx="0" fill="#7a7a7a" stroke="none" stroke-width="2"/><path d="M253 635 Q700 520 1191 278" fill="none" stroke="#3f9a80" stroke-width="7"/><path d="M253 635 Q700 525 1191 307" fill="none" stroke="#4c7d58" stroke-width="7"/><path d="M253 635 L314 709 Q750 640 1191 473" fill="none" stroke="#c24a5e" stroke-width="7"/><text x="253.0" y="788" font-size="25.299999999999997" fill="#444" font-weight="normal" font-style="normal" text-anchor="middle">0</text><text x="315.5" y="788" font-size="25.299999999999997" fill="#444" font-weight="normal" font-style="normal" text-anchor="middle">1</text><text x="378.0" y="788" font-size="25.299999999999997" fill="#444" font-weight="normal" font-style="normal" text-anchor="middle">2</text><text x="440.5" y="788" font-size="25.299999999999997" fill="#444" font-weight="normal" font-style="normal" text-anchor="middle">3</text><text x="503.0" y="788" font-size="25.299999999999997" fill="#444" font-weight="normal" font-style="normal" text-anchor="middle">4</text><text x="565.5" y="788" font-size="25.299999999999997" fill="#444" font-weight="normal" font-style="normal" text-anchor="middle">5</text><text x="628.0" y="788" font-size="25.299999999999997" fill="#444" font-weight="normal" font-style="normal" text-anchor="middle">6</text><text x="690.5" y="788" font-size="25.299999999999997" fill="#444" font-weight="normal" font-style="normal" text-anchor="middle">7</text><text x="753.0" y="788" font-size="25.299999999999997" fill="#444" font-weight="normal" font-style="normal" text-anchor="middle">8</text><text x="815.5" y="788" font-size="25.299999999999997" fill="#444" font-weight="normal" font-style="normal" text-anchor="middle">9</text><text x="878.0" y="788" font-size="25.299999999999997" fill="#444" font-weight="normal" font-style="normal" text-anchor="middle">10</text><text x="940.5" y="788" font-size="25.299999999999997" fill="#444" font-weight="normal" font-style="normal" text-anchor="middle">11</text><text x="1003.0" y="788" font-size="25.299999999999997" fill="#444" font-weight="normal" font-style="normal" text-anchor="middle">12</text><text x="1065.5" y="788" font-size="25.299999999999997" fill="#444" font-weight="normal" font-style="normal" text-anchor="middle">13</text><text x="1128.0" y="788" font-size="25.299999999999997" fill="#444" font-weight="normal" font-style="normal" text-anchor="middle">14</text><text x="1190.5" y="788" font-size="25.299999999999997" fill="#444" font-weight="normal" font-style="normal" text-anchor="middle">15</text><rect x="400" y="808" width="40" height="4" rx="0" fill="#2f8f6f" stroke="none" stroke-width="2"/><text x="450" y="815" font-size="17.25" fill="#333" font-weight="normal" font-style="normal" text-anchor="start">CD ladder (4.5%)</text><rect x="640" y="808" width="40" height="4" rx="0" fill="#3d6f4a" stroke="none" stroke-width="2"/><text x="690" y="815" font-size="17.25" fill="#333" font-weight="normal" font-style="normal" text-anchor="start">VA expected net (5.2%)</text><rect x="900" y="808" width="40" height="4" rx="0" fill="#c0394f" stroke="none" stroke-width="2"/><text x="950" y="815" font-size="17.25" fill="#333" font-weight="normal" font-style="normal" text-anchor="start">VA stress: -18% Y1 then 6.5%</text><text x="150" y="885" font-size="21.849999999999998" fill="#1f2d3d" font-weight="bold" font-style="normal" text-anchor="start">Illustrative outcome at year 15</text><text x="150" y="930" font-size="19.549999999999997" fill="#333" font-weight="normal" font-style="normal" text-anchor="start">CD: $193,548     VA expected: $183,360     VA stress: $162,315</text><rect x="1335" y="141" width="595" height="357" rx="8" fill="#edf3fb" stroke="#d5dfeb" stroke-width="2"/><text x="1395" y="210" font-size="23.0" fill="#1f3a5f" font-weight="bold" font-style="normal" text-anchor="start">Assumptions used</text><circle cx="1400" cy="249.1" r="3.3" fill="#333"/><text x="1417.595" y="255.0" font-size="19.549999999999997" fill="#333" font-weight="normal" font-style="normal" text-anchor="start">$100,000 starting value</text><circle cx="1400" cy="276.7" r="3.3" fill="#333"/><text x="1417.595" y="282.6" font-size="19.549999999999997" fill="#333" font-weight="normal" font-style="normal" text-anchor="start">CD ladder: reinvests 4.5% annual rate</text><circle cx="1400" cy="304.3" r="3.3" fill="#333"/><text x="1417.595" y="310.2" font-size="19.549999999999997" fill="#333" font-weight="normal" font-style="normal" text-anchor="start">VA: gross 6.5%, less 2.3% average annual costs</text><circle cx="1400" cy="331.9" r="3.3" fill="#333"/><text x="1417.595" y="337.8" font-size="19.549999999999997" fill="#333" font-weight="normal" font-style="normal" text-anchor="start">Stress case includes early bear-market drawdown</text><rect x="1335" y="528" width="595" height="512" rx="8" fill="#fff4ea" stroke="#f1dcc8" stroke-width="2"/><text x="1395" y="595" font-size="23.0" fill="#b8620a" font-weight="bold" font-style="normal" text-anchor="start">Advisory interpretation</text><circle cx="1400" cy="634.1" r="3.3" fill="#333"/><text x="1417.595" y="640.0" font-size="19.549999999999997" fill="#333" font-weight="normal" font-style="normal" text-anchor="start">Higher gross return does not guarantee higher net</text><text x="1417.595" y="668.75" font-size="19.549999999999997" fill="#333" font-weight="normal" font-style="normal" text-anchor="start">accumulation.</text><circle cx="1400" cy="691.6" r="3.3" fill="#333"/><text x="1417.595" y="697.5" font-size="19.549999999999997" fill="#333" font-weight="normal" font-style="normal" text-anchor="start">Fees can absorb much of the expected equity</text><text x="1417.595" y="726.25" font-size="19.549999999999997" fill="#333" font-weight="normal" font-style="normal" text-anchor="start">premium.</text><circle cx="1400" cy="749.1" r="3.3" fill="#333"/><text x="1417.595" y="755.0" font-size="19.549999999999997" fill="#333" font-weight="normal" font-style="normal" text-anchor="start">Early drawdowns can permanently lower wealth</text><text x="1417.595" y="783.75" font-size="19.549999999999997" fill="#333" font-weight="normal" font-style="normal" text-anchor="start">and future income flexibility.</text><circle cx="1400" cy="806.6" r="3.3" fill="#333"/><text x="1417.595" y="812.5" font-size="19.549999999999997" fill="#333" font-weight="normal" font-style="normal" text-anchor="start">A conservative CD client may not be willing or</text><text x="1417.595" y="841.25" font-size="19.549999999999997" fill="#333" font-weight="normal" font-style="normal" text-anchor="start">able to bear this path risk.</text><rect x="53" y="1061" width="1883" height="2" rx="0" fill="#d6dde4" stroke="none" stroke-width="2"/><text x="75" y="1092" font-size="19.549999999999997" fill="#6b7079" font-weight="normal" font-style="normal" text-anchor="start">Illustrative only; not a projection. Use client-specific assumptions and product-specific disclosures in actual recommendations.</text></svg>
</div>
<div style="position:absolute;left:4px;top:860.4px;font-size:21.5px;line-height:1;color:#3a3a3a;font-family:'Liberation Sans',sans-serif">5</div>
<div style="position:absolute;left:32.5px;top:852.5px;width:332px;height:191px;border:5px solid #b9502f;border-radius:11px"></div>
<div style="position:absolute;left:38.4px;top:859.2px;width:320.6px;height:180.5px;background:#fff;border-radius:5px;overflow:hidden;box-shadow:0 0 0 1px #d9d9d9, 0 1px 3px rgba(0,0,0,0.08)">
<svg width="320.6" height="180.5" viewBox="495 199 1988 1119" preserveAspectRatio="none" font-family="Liberation Sans, sans-serif" style="position:absolute;left:0;top:0">
<rect x="495" y="199" width="1988" height="108" fill="#111c2a"/>
<text x="577.00" y="244" font-size="38" font-weight="bold" font-style="normal" fill="#ffffff" textLength="971.04" lengthAdjust="spacingAndGlyphs">Penalty and Liquidity Comparison: Cost of Getting Out Early</text>
<rect x="578" y="362" width="1117" height="870.5" rx="9" fill="#fff" stroke="#d8dce3" stroke-width="2"/>
<rect x="1725" y="362" width="658" height="402" rx="9" fill="#ecfcf0" stroke="#b9dec4" stroke-width="2"/>
<rect x="1725.5" y="800" width="657.5" height="431" rx="9" fill="#fdf3f4" stroke="#e9c6cb" stroke-width="2"/>
<g stroke="#7a7a7a" stroke-width="5" fill="none">
<line x1="713" y1="924.9" x2="1619.5" y2="924.9"/>
<line x1="713" y1="831.5" x2="1619.5" y2="831.5"/>
<line x1="713" y1="738.0" x2="1619.5" y2="738.0"/>
<line x1="713" y1="644.6" x2="1619.5" y2="644.6"/>
<line x1="713" y1="551.1" x2="1619.5" y2="551.1"/>
<line x1="713" y1="457.7" x2="1619.5" y2="457.7"/>
<line x1="718.5" y1="456.7" x2="718.5" y2="1024.5"/>
<line x1="713" y1="1018.4" x2="1619.5" y2="1018.4"/>
<line x1="943.5" y1="1018.4" x2="943.5" y2="1024.5"/>
<line x1="1168.8" y1="1018.4" x2="1168.8" y2="1024.5"/>
<line x1="1394.1" y1="1018.4" x2="1394.1" y2="1024.5"/>
<line x1="1619.3" y1="1018.4" x2="1619.3" y2="1024.5"/>
</g>
<g fill="#2e7d32">
<rect x="786.1" y="948.2" width="89.8" height="70.2"/>
<rect x="1010.8" y="831.0" width="89.7" height="187.4"/>
<rect x="1236.0" y="800.0" width="90.6" height="218.4"/>
<rect x="1462.3" y="489.3" width="89.6" height="529.1"/>
</g>
<text x="691.86" y="1023.80" font-size="20" font-weight="normal" font-style="normal" fill="#111" textLength="10.06" lengthAdjust="spacingAndGlyphs" stroke="#111" stroke-width="0.4">0</text>
<text x="661.74" y="930.35" font-size="20" font-weight="normal" font-style="normal" fill="#111" textLength="40.15" lengthAdjust="spacingAndGlyphs" stroke="#111" stroke-width="0.4">3000</text>
<text x="661.74" y="836.90" font-size="20" font-weight="normal" font-style="normal" fill="#111" textLength="40.15" lengthAdjust="spacingAndGlyphs" stroke="#111" stroke-width="0.4">6000</text>
<text x="661.74" y="743.45" font-size="20" font-weight="normal" font-style="normal" fill="#111" textLength="40.15" lengthAdjust="spacingAndGlyphs" stroke="#111" stroke-width="0.4">9000</text>
<text x="651.70" y="650.00" font-size="20" font-weight="normal" font-style="normal" fill="#111" textLength="50.22" lengthAdjust="spacingAndGlyphs" stroke="#111" stroke-width="0.4">12000</text>
<text x="651.70" y="556.55" font-size="20" font-weight="normal" font-style="normal" fill="#111" textLength="50.22" lengthAdjust="spacingAndGlyphs" stroke="#111" stroke-width="0.4">15000</text>
<text x="651.70" y="463.10" font-size="20" font-weight="normal" font-style="normal" fill="#111" textLength="50.22" lengthAdjust="spacingAndGlyphs" stroke="#111" stroke-width="0.4">18000</text>
<text x="791.65" y="1049.60" font-size="21" font-weight="normal" font-style="normal" fill="#111" textLength="78.68" lengthAdjust="spacingAndGlyphs" stroke="#111" stroke-width="0.4">CD early</text>
<text x="782.65" y="1073.60" font-size="21" font-weight="normal" font-style="normal" fill="#111" textLength="96.81" lengthAdjust="spacingAndGlyphs" stroke="#111" stroke-width="0.4">withdrawal</text>
<text x="995.00" y="1049.60" font-size="21" font-weight="normal" font-style="normal" fill="#111" textLength="121.41" lengthAdjust="spacingAndGlyphs" stroke="#111" stroke-width="0.4">VA surrender</text>
<text x="1023.49" y="1073.60" font-size="21" font-weight="normal" font-style="normal" fill="#111" textLength="64.42" lengthAdjust="spacingAndGlyphs" stroke="#111" stroke-width="0.4">charge</text>
<text x="1220.60" y="1049.60" font-size="21" font-weight="normal" font-style="normal" fill="#111" textLength="121.41" lengthAdjust="spacingAndGlyphs" stroke="#111" stroke-width="0.4">VA surrender</text>
<text x="1221.25" y="1073.60" font-size="21" font-weight="normal" font-style="normal" fill="#111" textLength="120.06" lengthAdjust="spacingAndGlyphs" stroke="#111" stroke-width="0.4">+ tax penalty</text>
<text x="1444.75" y="1049.60" font-size="21" font-weight="normal" font-style="normal" fill="#111" textLength="123.68" lengthAdjust="spacingAndGlyphs" stroke="#111" stroke-width="0.4">VA total early</text>
<text x="1451.68" y="1073.60" font-size="21" font-weight="normal" font-style="normal" fill="#111" textLength="109.87" lengthAdjust="spacingAndGlyphs" stroke="#111" stroke-width="0.4">exit impact*</text>
<text x="645.20" y="1137.00" font-size="19" font-weight="normal" font-style="normal" fill="#6b7079" textLength="998.57" lengthAdjust="spacingAndGlyphs" stroke="#6b7079" stroke-width="0.4">*VA total early exit impact assumes year-2 liquidation with 6% surrender charge, 10% tax penalty on $10k gains (if under 59½),</text>
<text x="645.00" y="1161.20" font-size="19" font-weight="normal" font-style="normal" fill="#6b7079" textLength="246.69" lengthAdjust="spacingAndGlyphs" stroke="#6b7079" stroke-width="0.4">and 10% market decline at exit.</text>
<text x="1781.00" y="429.00" font-size="25.5" font-weight="bold" font-style="normal" fill="#2e7d32" textLength="224.59" lengthAdjust="spacingAndGlyphs">How penalties differ</text>
<text x="1803.30" y="478.00" font-size="20.5" font-weight="normal" font-style="normal" fill="#1f2a2e" textLength="455.13" lengthAdjust="spacingAndGlyphs" stroke="#1f2a2e" stroke-width="0.4">CD: penalty is generally explicit and contractually</text>
<circle cx="1785.1" cy="471.7" r="3.6" fill="#1f2a2e"/>
<text x="1803.30" y="505.45" font-size="20.5" font-weight="normal" font-style="normal" fill="#1f2a2e" textLength="87.71" lengthAdjust="spacingAndGlyphs" stroke="#1f2a2e" stroke-width="0.4">bounded.</text>
<text x="1803.30" y="532.90" font-size="20.5" font-weight="normal" font-style="normal" fill="#1f2a2e" textLength="454.70" lengthAdjust="spacingAndGlyphs" stroke="#1f2a2e" stroke-width="0.4">VA: charges can include surrender schedules and</text>
<circle cx="1785.1" cy="526.6" r="3.6" fill="#1f2a2e"/>
<text x="1803.30" y="560.35" font-size="20.5" font-weight="normal" font-style="normal" fill="#1f2a2e" textLength="196.70" lengthAdjust="spacingAndGlyphs" stroke="#1f2a2e" stroke-width="0.4">market-value effects.</text>
<text x="1803.30" y="587.80" font-size="20.5" font-weight="normal" font-style="normal" fill="#1f2a2e" textLength="428.17" lengthAdjust="spacingAndGlyphs" stroke="#1f2a2e" stroke-width="0.4">Tax penalties can apply depending on age and</text>
<circle cx="1785.1" cy="581.5" r="3.6" fill="#1f2a2e"/>
<text x="1803.41" y="615.25" font-size="20.5" font-weight="normal" font-style="normal" fill="#1f2a2e" textLength="199.98" lengthAdjust="spacingAndGlyphs" stroke="#1f2a2e" stroke-width="0.4">withdrawal structure.</text>
<text x="1803.30" y="642.70" font-size="20.5" font-weight="normal" font-style="normal" fill="#1f2a2e" textLength="466.69" lengthAdjust="spacingAndGlyphs" stroke="#1f2a2e" stroke-width="0.4">Exchange recommendations can restart surrender</text>
<circle cx="1785.1" cy="636.4" r="3.6" fill="#1f2a2e"/>
<text x="1803.30" y="670.15" font-size="20.5" font-weight="normal" font-style="normal" fill="#1f2a2e" textLength="73.93" lengthAdjust="spacingAndGlyphs" stroke="#1f2a2e" stroke-width="0.4">periods.</text>
<text x="1780.00" y="865.70" font-size="26" font-weight="bold" font-style="normal" fill="#a51d2d" textLength="230.36" lengthAdjust="spacingAndGlyphs">Advisor talking point</text>
<text x="1782.20" y="917.90" font-size="22" font-weight="normal" font-style="italic" fill="#1f2633" textLength="521.83" lengthAdjust="spacingAndGlyphs" stroke="#1f2633" stroke-width="0.4">“A CD penalty is usually a known interest give-up. An</text>
<text x="1780.40" y="947.75" font-size="22" font-weight="normal" font-style="italic" fill="#1f2633" textLength="530.76" lengthAdjust="spacingAndGlyphs" stroke="#1f2633" stroke-width="0.4">annuity exit can involve a surrender charge, potential</text>
<text x="1780.40" y="977.60" font-size="22" font-weight="normal" font-style="italic" fill="#1f2633" textLength="485.36" lengthAdjust="spacingAndGlyphs" stroke="#1f2633" stroke-width="0.4">tax penalty and possible market loss all at once.”</text>
<text x="1779.80" y="1137.30" font-size="20" font-weight="normal" font-style="normal" fill="#6b6e78" textLength="502.67" lengthAdjust="spacingAndGlyphs" stroke="#6b6e78" stroke-width="0.4">This distinction should be front-and-center in suitability</text>
<text x="1779.80" y="1163.10" font-size="20" font-weight="normal" font-style="normal" fill="#6b6e78" textLength="106.24" lengthAdjust="spacingAndGlyphs" stroke="#6b6e78" stroke-width="0.4">discussions.</text>
<rect x="548" y="1260.2" width="1883" height="2" fill="#d6dde4"/>
<text x="570.00" y="1291.20" font-size="16.5" font-weight="normal" font-style="normal" fill="#555c66" textLength="581.34" lengthAdjust="spacingAndGlyphs" stroke="#555c66" stroke-width="0.4">Penalty assumptions for training illustration only; actual product terms may vary.</text>
</svg>
</div>
<div style="position:absolute;left:4px;top:1071.1px;font-size:21.5px;line-height:1;color:#3a3a3a;font-family:'Liberation Sans',sans-serif">6</div>
<div style="position:absolute;left:38.4px;top:1069.9px;width:320.6px;height:180.5px;background:#fff;border-radius:5px;overflow:hidden;box-shadow:0 0 0 1px #d9d9d9, 0 1px 3px rgba(0,0,0,0.08)">
<svg width="320.6" height="180.5" viewBox="0 0 1988 1119" preserveAspectRatio="none" font-family="Liberation Sans, sans-serif" style="position:absolute;left:0;top:0"><rect x="0" y="0" width="1988" height="109" rx="0" fill="#111c2a" stroke="none" stroke-width="2"/><text x="74" y="45" font-size="38" fill="#fff" font-weight="bold" textLength="1115" lengthAdjust="spacingAndGlyphs">Risk Tolerance and Suitability: Align Product Choice to Client Profile</text><rect x="71" y="151" width="1098" height="880" rx="8" fill="#ffffff" stroke="#dfe4ea" stroke-width="2"/><text x="620" y="200" font-size="19.2" fill="#777" font-weight="normal" font-style="normal" text-anchor="middle">Liquidity Need (left: low  → right: high)</text><rect x="146" y="242" width="487" height="347" rx="0" fill="#e8f5ec" stroke="#d5dfe0" stroke-width="2"/><rect x="633" y="242" width="482" height="347" rx="0" fill="#fdf3dc" stroke="#e8dcc0" stroke-width="2"/><rect x="146" y="589" width="487" height="347" rx="0" fill="#e8f1fb" stroke="#d5dfeb" stroke-width="2"/><rect x="633" y="589" width="482" height="347" rx="0" fill="#fde9ec" stroke="#ecd0d5" stroke-width="2"/><text x="190" y="300" font-size="19.2" fill="#2f4f3a" font-weight="normal" font-style="normal" text-anchor="start">Potential VA fit</text><text x="190" y="328" font-size="19.2" fill="#2f4f3a" font-weight="normal" font-style="normal" text-anchor="start">(High tolerance, low liquidity need, long</text><text x="190" y="352" font-size="19.2" fill="#2f4f3a" font-weight="normal" font-style="normal" text-anchor="start">horizon)</text><text x="677" y="300" font-size="19.2" fill="#5a4520" font-weight="normal" font-style="normal" text-anchor="start">Risk of concern</text><text x="677" y="328" font-size="19.2" fill="#5a4520" font-weight="normal" font-style="normal" text-anchor="start">(High liquidity need)</text><text x="0" y="0" font-size="16" fill="#888" transform="translate(123,900) rotate(-90)">Risk tolerance (low → high)</text><rect x="1211" y="151" width="677" height="404" rx="8" fill="#edf3fb" stroke="#d5dfeb" stroke-width="2"/><text x="1280" y="225" font-size="25.2" fill="#1f3a5f" font-weight="bold" font-style="normal" text-anchor="start">Data required before recommendation</text><circle cx="1290" cy="273.9" r="3.5" fill="#333"/><text x="1308.36" y="280.0" font-size="20.4" fill="#333" font-weight="normal" font-style="normal" text-anchor="start">Age, income, financial situation and needs</text><circle cx="1290" cy="305.1" r="3.5" fill="#333"/><text x="1308.36" y="311.2" font-size="20.4" fill="#333" font-weight="normal" font-style="normal" text-anchor="start">Investment objectives and time horizon</text><circle cx="1290" cy="336.3" r="3.5" fill="#333"/><text x="1308.36" y="342.4" font-size="20.4" fill="#333" font-weight="normal" font-style="normal" text-anchor="start">Liquidity needs, liquid net worth and risk tolerance</text><circle cx="1290" cy="367.5" r="3.5" fill="#333"/><text x="1308.36" y="373.6" font-size="20.4" fill="#333" font-weight="normal" font-style="normal" text-anchor="start">Tax status and intended use of the annuity</text><rect x="1211" y="582" width="677" height="449" rx="8" fill="#fff4e6" stroke="#f1dcb8" stroke-width="2"/><text x="1280" y="650" font-size="25.2" fill="#b8620a" font-weight="bold" font-style="normal" text-anchor="start">Red flags for CD-to-VA replacement</text></svg>
</div>
</div>
<div id="pstrip"></div>
<div id="slide" style="position:absolute;left:495px;top:199px;width:1988px;height:1119px;background:#fff;box-shadow:0 0 0 1px #dcdcdc, 0 6px 10px rgba(0,0,0,0.09)">
<svg width="1988" height="1119" viewBox="495 199 1988 1119" style="position:absolute;left:0;top:0" font-family="Liberation Sans, sans-serif">
<rect x="495" y="199" width="1988" height="119" fill="#111c2a"/>
<text x="577.00" y="258.30" font-size="35" font-weight="bold" font-style="normal" fill="#ffffff" textLength="971.04" lengthAdjust="spacingAndGlyphs">Penalty and Liquidity Comparison: Cost of Getting Out Early</text>
<rect x="578" y="362" width="1117" height="870.5" rx="9" fill="#fff" stroke="#d8dce3" stroke-width="2"/>
<rect x="1725" y="362" width="658" height="402" rx="9" fill="#ecfcf0" stroke="#b9dec4" stroke-width="2"/>
<rect x="1725.5" y="800" width="657.5" height="431" rx="9" fill="#fdf3f4" stroke="#e9c6cb" stroke-width="2"/>
<g stroke="#898989" stroke-width="2" fill="none">
<line x1="713" y1="924.9" x2="1619.5" y2="924.9"/>
<line x1="713" y1="831.5" x2="1619.5" y2="831.5"/>
<line x1="713" y1="738.0" x2="1619.5" y2="738.0"/>
<line x1="713" y1="644.6" x2="1619.5" y2="644.6"/>
<line x1="713" y1="551.1" x2="1619.5" y2="551.1"/>
<line x1="713" y1="457.7" x2="1619.5" y2="457.7"/>
<line x1="718.5" y1="456.7" x2="718.5" y2="1024.5"/>
<line x1="713" y1="1018.4" x2="1619.5" y2="1018.4"/>
<line x1="943.5" y1="1018.4" x2="943.5" y2="1024.5"/>
<line x1="1168.8" y1="1018.4" x2="1168.8" y2="1024.5"/>
<line x1="1394.1" y1="1018.4" x2="1394.1" y2="1024.5"/>
<line x1="1619.3" y1="1018.4" x2="1619.3" y2="1024.5"/>
</g>
<g fill="#2e7d32">
<rect x="786.1" y="948.2" width="89.8" height="70.2"/>
<rect x="1010.8" y="831.0" width="89.7" height="187.4"/>
<rect x="1236.0" y="800.0" width="90.6" height="218.4"/>
<rect x="1462.3" y="489.3" width="89.6" height="529.1"/>
</g>
<text x="691.86" y="1023.80" font-size="20" font-weight="normal" font-style="normal" fill="#111" textLength="10.06" lengthAdjust="spacingAndGlyphs" stroke="#111" stroke-width="0.4">0</text>
<text x="661.74" y="930.35" font-size="20" font-weight="normal" font-style="normal" fill="#111" textLength="40.15" lengthAdjust="spacingAndGlyphs" stroke="#111" stroke-width="0.4">3000</text>
<text x="661.74" y="836.90" font-size="20" font-weight="normal" font-style="normal" fill="#111" textLength="40.15" lengthAdjust="spacingAndGlyphs" stroke="#111" stroke-width="0.4">6000</text>
<text x="661.74" y="743.45" font-size="20" font-weight="normal" font-style="normal" fill="#111" textLength="40.15" lengthAdjust="spacingAndGlyphs" stroke="#111" stroke-width="0.4">9000</text>
<text x="651.70" y="650.00" font-size="20" font-weight="normal" font-style="normal" fill="#111" textLength="50.22" lengthAdjust="spacingAndGlyphs" stroke="#111" stroke-width="0.4">12000</text>
<text x="651.70" y="556.55" font-size="20" font-weight="normal" font-style="normal" fill="#111" textLength="50.22" lengthAdjust="spacingAndGlyphs" stroke="#111" stroke-width="0.4">15000</text>
<text x="651.70" y="463.10" font-size="20" font-weight="normal" font-style="normal" fill="#111" textLength="50.22" lengthAdjust="spacingAndGlyphs" stroke="#111" stroke-width="0.4">18000</text>
<text x="791.65" y="1049.60" font-size="21" font-weight="normal" font-style="normal" fill="#111" textLength="78.68" lengthAdjust="spacingAndGlyphs" stroke="#111" stroke-width="0.4">CD early</text>
<text x="782.65" y="1073.60" font-size="21" font-weight="normal" font-style="normal" fill="#111" textLength="96.81" lengthAdjust="spacingAndGlyphs" stroke="#111" stroke-width="0.4">withdrawal</text>
<text x="995.00" y="1049.60" font-size="21" font-weight="normal" font-style="normal" fill="#111" textLength="121.41" lengthAdjust="spacingAndGlyphs" stroke="#111" stroke-width="0.4">VA surrender</text>
<text x="1023.49" y="1073.60" font-size="21" font-weight="normal" font-style="normal" fill="#111" textLength="64.42" lengthAdjust="spacingAndGlyphs" stroke="#111" stroke-width="0.4">charge</text>
<text x="1220.60" y="1049.60" font-size="21" font-weight="normal" font-style="normal" fill="#111" textLength="121.41" lengthAdjust="spacingAndGlyphs" stroke="#111" stroke-width="0.4">VA surrender</text>
<text x="1221.25" y="1073.60" font-size="21" font-weight="normal" font-style="normal" fill="#111" textLength="120.06" lengthAdjust="spacingAndGlyphs" stroke="#111" stroke-width="0.4">+ tax penalty</text>
<text x="1444.75" y="1049.60" font-size="21" font-weight="normal" font-style="normal" fill="#111" textLength="123.68" lengthAdjust="spacingAndGlyphs" stroke="#111" stroke-width="0.4">VA total early</text>
<text x="1451.68" y="1073.60" font-size="21" font-weight="normal" font-style="normal" fill="#111" textLength="109.87" lengthAdjust="spacingAndGlyphs" stroke="#111" stroke-width="0.4">exit impact*</text>
<text x="645.20" y="1137.00" font-size="19" font-weight="normal" font-style="normal" fill="#6b7079" textLength="998.57" lengthAdjust="spacingAndGlyphs" stroke="#6b7079" stroke-width="0.4">*VA total early exit impact assumes year-2 liquidation with 6% surrender charge, 10% tax penalty on $10k gains (if under 59½),</text>
<text x="645.00" y="1161.20" font-size="19" font-weight="normal" font-style="normal" fill="#6b7079" textLength="246.69" lengthAdjust="spacingAndGlyphs" stroke="#6b7079" stroke-width="0.4">and 10% market decline at exit.</text>
<text x="1781.00" y="429.00" font-size="25.5" font-weight="bold" font-style="normal" fill="#2e7d32" textLength="224.59" lengthAdjust="spacingAndGlyphs">How penalties differ</text>
<text x="1803.30" y="478.00" font-size="20.5" font-weight="normal" font-style="normal" fill="#1f2a2e" textLength="455.13" lengthAdjust="spacingAndGlyphs" stroke="#1f2a2e" stroke-width="0.4">CD: penalty is generally explicit and contractually</text>
<circle cx="1785.1" cy="471.7" r="3.6" fill="#1f2a2e"/>
<text x="1803.30" y="505.45" font-size="20.5" font-weight="normal" font-style="normal" fill="#1f2a2e" textLength="87.71" lengthAdjust="spacingAndGlyphs" stroke="#1f2a2e" stroke-width="0.4">bounded.</text>
<text x="1803.30" y="532.90" font-size="20.5" font-weight="normal" font-style="normal" fill="#1f2a2e" textLength="454.70" lengthAdjust="spacingAndGlyphs" stroke="#1f2a2e" stroke-width="0.4">VA: charges can include surrender schedules and</text>
<circle cx="1785.1" cy="526.6" r="3.6" fill="#1f2a2e"/>
<text x="1803.30" y="560.35" font-size="20.5" font-weight="normal" font-style="normal" fill="#1f2a2e" textLength="196.70" lengthAdjust="spacingAndGlyphs" stroke="#1f2a2e" stroke-width="0.4">market-value effects.</text>
<text x="1803.30" y="587.80" font-size="20.5" font-weight="normal" font-style="normal" fill="#1f2a2e" textLength="428.17" lengthAdjust="spacingAndGlyphs" stroke="#1f2a2e" stroke-width="0.4">Tax penalties can apply depending on age and</text>
<circle cx="1785.1" cy="581.5" r="3.6" fill="#1f2a2e"/>
<text x="1803.41" y="615.25" font-size="20.5" font-weight="normal" font-style="normal" fill="#1f2a2e" textLength="199.98" lengthAdjust="spacingAndGlyphs" stroke="#1f2a2e" stroke-width="0.4">withdrawal structure.</text>
<text x="1803.30" y="642.70" font-size="20.5" font-weight="normal" font-style="normal" fill="#1f2a2e" textLength="466.69" lengthAdjust="spacingAndGlyphs" stroke="#1f2a2e" stroke-width="0.4">Exchange recommendations can restart surrender</text>
<circle cx="1785.1" cy="636.4" r="3.6" fill="#1f2a2e"/>
<text x="1803.30" y="670.15" font-size="20.5" font-weight="normal" font-style="normal" fill="#1f2a2e" textLength="73.93" lengthAdjust="spacingAndGlyphs" stroke="#1f2a2e" stroke-width="0.4">periods.</text>
<text x="1780.00" y="865.70" font-size="26" font-weight="bold" font-style="normal" fill="#a51d2d" textLength="230.36" lengthAdjust="spacingAndGlyphs">Advisor talking point</text>
<text x="1782.20" y="917.90" font-size="22" font-weight="normal" font-style="italic" fill="#1f2633" textLength="521.83" lengthAdjust="spacingAndGlyphs" stroke="#1f2633" stroke-width="0.4">“A CD penalty is usually a known interest give-up. An</text>
<text x="1780.40" y="947.75" font-size="22" font-weight="normal" font-style="italic" fill="#1f2633" textLength="530.76" lengthAdjust="spacingAndGlyphs" stroke="#1f2633" stroke-width="0.4">annuity exit can involve a surrender charge, potential</text>
<text x="1780.40" y="977.60" font-size="22" font-weight="normal" font-style="italic" fill="#1f2633" textLength="485.36" lengthAdjust="spacingAndGlyphs" stroke="#1f2633" stroke-width="0.4">tax penalty and possible market loss all at once.”</text>
<text x="1779.80" y="1137.30" font-size="20" font-weight="normal" font-style="normal" fill="#6b6e78" textLength="502.67" lengthAdjust="spacingAndGlyphs" stroke="#6b6e78" stroke-width="0.4">This distinction should be front-and-center in suitability</text>
<text x="1779.80" y="1163.10" font-size="20" font-weight="normal" font-style="normal" fill="#6b6e78" textLength="106.24" lengthAdjust="spacingAndGlyphs" stroke="#6b6e78" stroke-width="0.4">discussions.</text>
<rect x="548" y="1260.2" width="1883" height="2" fill="#d6dde4"/>
<text x="570.00" y="1291.20" font-size="16.5" font-weight="normal" font-style="normal" fill="#555c66" textLength="581.34" lengthAdjust="spacingAndGlyphs" stroke="#555c66" stroke-width="0.4">Penalty assumptions for training illustration only; actual product terms may vary.</text>
</svg></div>
</body></html>
